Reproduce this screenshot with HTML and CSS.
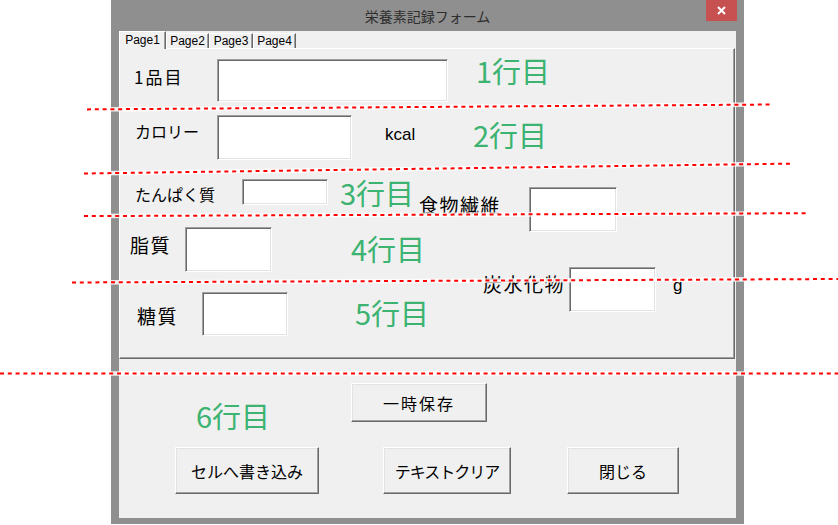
FILE: index.html
```html
<!DOCTYPE html>
<html lang="ja">
<head>
    <meta charset="UTF-8">
    <meta name="viewport" content="width=device-width, initial-scale=1.0">
    <title>栄養素記録フォーム</title>
    <link rel="stylesheet" href="styles.css">
</head>
<body>
    <div class="window">
        <div class="titlebar">
            <span></span>
            <span class="title">栄養素記録フォーム</span>
            <span class="close-wrap">
                <span class="close">
                    <svg width="9" height="9" viewBox="0 0 9 9">
                        <path d="M1 1 L8 8 M8 1 L1 8" stroke="#fff" stroke-width="2" fill="none"/>
                    </svg>
                </span>
            </span>
        </div>
        <div class="client">
            <div class="tabs">
                <div class="tab tab-active tab-1">Page1</div>
                <div class="tab tab-2">Page2</div>
                <div class="tab tab-3">Page3</div>
                <div class="tab tab-4">Page4</div>
            </div>
            <div class="page">
                <!-- 1行目 -->
                <div class="row row-1">
                    <span class="label lbl-name">1品目</span>
                    <input class="textbox tb-name" type="text">
                    <span class="note note-1">1行目</span>
                </div>
                <!-- 2行目 -->
                <div class="row row-2">
                    <span class="label lbl-energy">カロリー</span>
                    <input class="textbox tb-energy" type="text">
                    <span class="unit unit-kcal">kcal</span>
                    <span class="note note-2">2行目</span>
                </div>
                <!-- 3行目 -->
                <div class="row row-3">
                    <span class="label lbl-protein">たんぱく質</span>
                    <input class="textbox tb-protein" type="text">
                    <span class="note note-3">3行目</span>
                    <span class="label label-kanji lbl-fiber">食物繊維</span>
                    <input class="textbox tb-fiber" type="text">
                </div>
                <!-- 4行目 -->
                <div class="row row-4">
                    <span class="label label-kanji lbl-fat">脂質</span>
                    <input class="textbox tb-fat" type="text">
                    <span class="note note-4">4行目</span>
                </div>
                <!-- 5行目 -->
                <div class="row row-5">
                    <span class="label label-kanji lbl-sugar">糖質</span>
                    <input class="textbox tb-sugar" type="text">
                    <span class="note note-5">5行目</span>
                    <span class="label label-kanji lbl-carb">炭水化物</span>
                    <input class="textbox tb-carb" type="text">
                    <span class="unit unit-g">g</span>
                </div>
            </div>
            <!-- 6行目 -->
            <div class="footer-top">
                <span class="note note-6">6行目</span>
                <button class="btn btn-save">一時保存</button>
            </div>
            <div class="footer-bottom">
                <button class="btn btn-write">セルへ書き込み</button>
                <button class="btn btn-clear">テキストクリア</button>
                <button class="btn btn-close">閉じる</button>
            </div>
        </div>
    </div>

    <!-- 区切り線（注釈） -->
    <svg class="guides" width="838" height="525" viewBox="0 0 838 525">
        <g class="guide-halo">
            <line x1="87" y1="109.4" x2="772" y2="104.5"/>
            <line x1="84" y1="173.5" x2="793" y2="163.6"/>
            <line x1="84" y1="216.1" x2="808" y2="213.2"/>
            <line x1="72" y1="282.5" x2="838" y2="279"/>
            <line x1="0" y1="373.5" x2="838" y2="373.5"/>
        </g>
        <g class="guide-dash">
            <line x1="87" y1="109.4" x2="772" y2="104.5"/>
            <line x1="84" y1="173.5" x2="793" y2="163.6"/>
            <line x1="84" y1="216.1" x2="808" y2="213.2"/>
            <line x1="72" y1="282.5" x2="838" y2="279"/>
            <line x1="0" y1="373.5" x2="838" y2="373.5"/>
        </g>
    </svg>
</body>
</html>
```

FILE: styles.css
```css
* {
    margin: 0;
    padding: 0;
    box-sizing: border-box;
}

body {
    font-family: "Noto Sans CJK JP", sans-serif;
    background: #fff;
    width: 838px;
    height: 525px;
    overflow: hidden;
    position: relative;
}

.window {
    margin-left: 111px;
    width: 633px;
    height: 524px;
    background: #8f8f8f;
}

/* タイトルバー */
.titlebar {
    height: 30px;
    display: grid;
    grid-template-columns: 1fr auto 1fr;
}

.title {
    font-size: 14px;
    line-height: 32px;
    color: #2e2e2e;
}

.close-wrap {
    justify-self: end;
    margin-right: 7px;
}

.close {
    width: 31px;
    height: 21px;
    background: #c75050;
    display: flex;
    justify-content: center;
    align-items: center;
}

.client {
    margin: 0 8px;
    height: 487px;
    background: #f0f0f0;
}

/* タブ */
.tabs {
    display: flex;
    align-items: flex-start;
    height: 18px;
    margin-top: 1px;
}

.tab {
    height: 15px;
    margin-top: 2px;
    display: flex;
    justify-content: center;
    align-items: center;
    font-family: "Liberation Sans", sans-serif;
    font-size: 12px;
    color: #000;
    background: #f0f0f0;
    border-left: 1px solid #fff;
    border-top: 1px solid #fff;
    border-right: 1px solid #696969;
    box-shadow: inset -1px 0 #a0a0a0;
}

.tab-active {
    height: 18px;
    margin-top: 0;
    position: relative;
    z-index: 1;
    padding-bottom: 2px;
}

.tab-1 { width: 47px; }
.tab-2 { width: 43px; }
.tab-3 { width: 44px; }
.tab-4 { width: 43px; }

.page {
    margin-top: -1px;
    width: 616px;
    height: 311px;
    border-top: 1px solid #fff;
    border-left: 1px solid #fff;
    border-right: 1px solid #696969;
    border-bottom: 1px solid #696969;
    box-shadow: inset -1px -1px #a0a0a0;
}

.row {
    display: flex;
    align-items: flex-start;
}

.row-1 { height: 61px; }
.row-2 { height: 60px; }
.row-3 { height: 52px; }
.row-4 { height: 58px; }
.row-5 { height: 78px; }

.label {
    font-size: 16px;
    line-height: 1;
    color: #000;
    white-space: nowrap;
    flex: none;
}

.label-kanji {
    font-size: 19px;
    letter-spacing: 1.5px;
}

.unit {
    font-family: "Liberation Sans", sans-serif;
    font-size: 17px;
    line-height: 1;
    color: #000;
    flex: none;
}

.note {
    font-size: 29px;
    line-height: 1;
    color: #3cb371;
    white-space: nowrap;
    flex: none;
}

.textbox {
    flex: none;
    background: #fff;
    border: 1px solid;
    border-color: #a0a0a0 #fff #fff #a0a0a0;
    box-shadow: inset 1px 1px #696969, inset -1px -1px #e3e3e3;
    outline: none;
    font-size: 16px;
}

/* 1行目 */
.lbl-name { margin: 19px 0 0 14px; width: 83px; font-size: 17px; letter-spacing: 2px; }
.tb-name { width: 231px; height: 43px; margin-top: 10px; }
.note-1 { margin: 7px 0 0 28px; }

/* 2行目 */
.lbl-energy { margin: 13px 0 0 15px; width: 82px; }
.tb-energy { width: 135px; height: 45px; margin-top: 5px; }
.unit-kcal { margin: 16px 0 0 33px; width: 88px; }
.note-2 { margin-top: 10px; }

/* 3行目 */
.lbl-protein { margin: 16px 0 0 15px; width: 107px; }
.tb-protein { width: 86px; height: 26px; margin-top: 9px; }
.note-3 { margin: 8px 0 0 12px; width: 79px; }
.lbl-fiber { margin-top: 25px; width: 110px; }
.tb-fiber { width: 88px; height: 45px; margin-top: 17px; }

/* 4行目 */
.lbl-fat { margin: 13px 0 0 10px; width: 55px; }
.tb-fat { width: 87px; height: 45px; margin-top: 5px; }
.note-4 { margin: 12px 0 0 79px; }

/* 5行目 */
.lbl-sugar { margin: 26px 0 0 17px; width: 65px; }
.tb-sugar { width: 86px; height: 44px; margin-top: 12px; }
.note-5 { margin: 18px 0 0 67px; width: 128px; }
.lbl-carb { margin-top: -6px; width: 86px; }
.tb-carb { width: 87px; height: 45px; margin-top: -13px; }
.unit-g { margin: -3px 0 0 17px; }

/* ボタン */
.footer-top {
    display: flex;
    align-items: flex-start;
    height: 71px;
}

.footer-bottom {
    display: flex;
    margin-top: 17px;
}

.note-6 { margin: 42px 0 0 77px; width: 155px; }

.btn {
    flex: none;
    font-family: "Noto Sans CJK JP", sans-serif;
    font-size: 16px;
    line-height: 1;
    color: #000;
    background: #f0f0f0;
    border: 1px solid;
    border-color: #fff #696969 #696969 #fff;
    box-shadow: inset -1px -1px #a0a0a0, inset 1px 1px #e3e3e3;
    cursor: pointer;
}

.btn-save { width: 136px; height: 39px; margin-top: 24px; letter-spacing: 2px; }
.btn-write { width: 144px; height: 47px; margin-left: 56px; }
.btn-clear { width: 128px; height: 47px; margin-left: 64px; letter-spacing: -1px; }
.btn-close { width: 112px; height: 47px; margin-left: 56px; }

/* 注釈の赤い点線 */
.guides {
    position: absolute;
    left: 0;
    top: 0;
    pointer-events: none;
}

.guide-halo line {
    stroke: #fff;
    stroke-width: 4.5;
    opacity: 0.85;
}

.guide-dash line {
    stroke: #f00;
    stroke-width: 2;
    stroke-dasharray: 4 3.8;
}
```
